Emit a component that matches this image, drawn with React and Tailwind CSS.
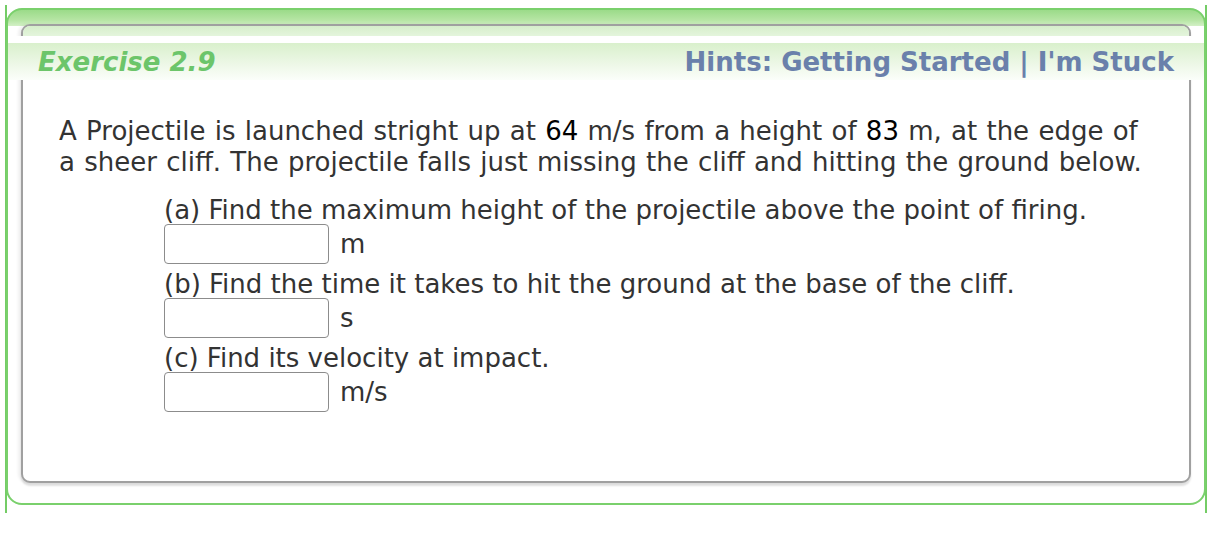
import React from 'react';

const font = { fontFamily: '"DejaVu Sans", Verdana, sans-serif' };

const AnswerRow = ({ unit }) => (
    <div className="flex items-center h-[40px] mb-[6px]">
        <input
            type="text"
            className="w-[165px] h-[40px] border border-[#8c8c8c] rounded-[4px] bg-white outline-none"
        />
        <span className="ml-[11px] text-[#333]">{unit}</span>
    </div>
);

export default function App() {
    return (
        <div className="w-[1222px] h-[554px] bg-white overflow-hidden" style={font}>
            {/* outer green rails */}
            <div className="ml-[5px] mt-[5px] w-[1202px] h-[508px] border-x-2 border-[#74cc66] pt-[3px]">
                {/* outer rounded frame */}
                <div className="-mx-[1px] h-[497px] rounded-t-[16px] rounded-b-[16px] border-2 border-[#7ad06c] bg-[linear-gradient(to_bottom,#9bdb89_0px,#b6e5a4_10px,#d3f0c6_16px,#ffffff_16px)] px-[13px] pt-[14px] pb-[20px]">
                    {/* inner gray frame */}
                    <div className="h-full rounded-[9px] border-2 border-[#a0a0a0] bg-white shadow-[0_3px_2px_rgba(0,0,0,0.12),-3px_0_3px_rgba(0,0,0,0.06)]">
                        <div className="h-[10px] rounded-t-[7px] bg-[linear-gradient(to_bottom,#d6eecb,#e4f5dc)]" />
                        <div className="-mx-[15px] h-[7px] bg-white" />
                        {/* header band */}
                        <div className="-mx-[15px] h-[37px] bg-[linear-gradient(to_bottom,#d9f0cc,#eef8e8_60%,#fbfefa)] flex items-center justify-between pl-[30px] pr-[30px] pt-[2px] font-bold text-[26px]">
                            <span className="italic text-[#6cc56a]">Exercise 2.9</span>
                            <span className="text-[#6a80ab]">Hints: Getting Started | I'm Stuck</span>
                        </div>

                        {/* body */}
                        <div className="pl-[36px] pt-[36px] text-[26px] text-[#333] leading-[31px]">
                            <p className="whitespace-nowrap [word-spacing:1px]">
                                A Projectile is launched stright up at <span className="text-black">64</span> m/s from a height of <span className="text-black">83</span> m, at the edge of
                                <br />
                                a sheer cliff. The projectile falls just missing the cliff and hitting the ground below.
                            </p>

                            <div className="pl-[105px] pt-[18px] leading-[28px] whitespace-nowrap">
                                <div>(a) Find the maximum height of the projectile above the point of firing.</div>
                                <AnswerRow unit="m" />
                                <div>(b) Find the time it takes to hit the ground at the base of the cliff.</div>
                                <AnswerRow unit="s" />
                                <div>(c) Find its velocity at impact.</div>
                                <AnswerRow unit="m/s" />
                            </div>
                        </div>
                    </div>
                </div>
            </div>
        </div>
    );
}
